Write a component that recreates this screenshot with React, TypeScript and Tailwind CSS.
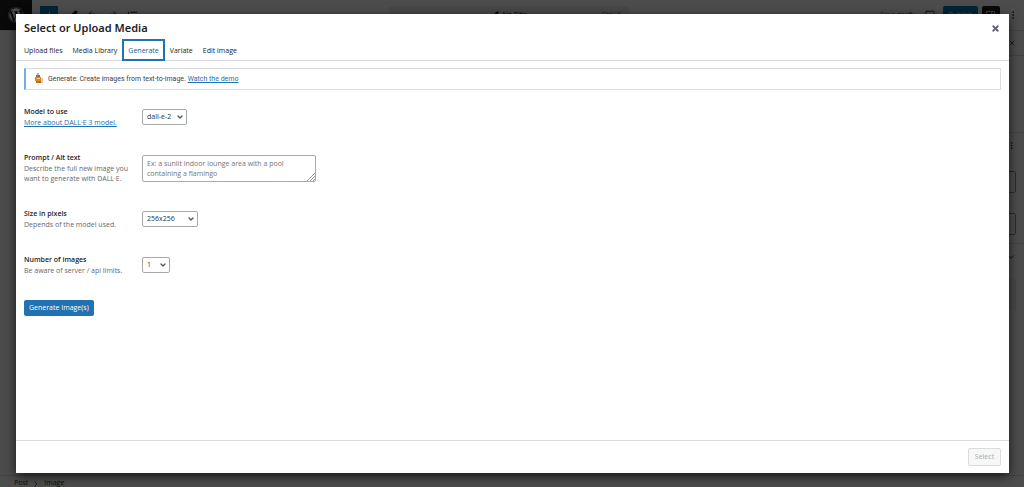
import type { ReactNode } from 'react';
import { ChevronDown, ChevronRight, ListTree, Monitor, MoreVertical, PanelRight, Pencil, Plus, Redo2, Undo2, X } from 'lucide-react';
import { FaWordpress } from 'react-icons/fa';

const tabs = ['Upload files', 'Media Library', 'Generate', 'Variate', 'Edit image'];

function EditorPage() {
  return (
    <div aria-hidden="true" className="flex h-screen flex-col overflow-hidden bg-white text-[7px] text-[#1e1e1e]">
      <header className="flex h-[31px] shrink-0 items-center border-b border-[#e0e0e0]">
        <div className="flex h-full w-8 items-center justify-center bg-[#1e1e1e] text-white">
          <FaWordpress size={16} />
        </div>
        <div className="ml-2 flex items-center gap-[9px]">
          <span className="flex h-[18px] w-[18px] items-center justify-center bg-[#007cba] text-white"><Plus size={11} /></span>
          <Pencil size={11} fill="currentColor" />
          <Undo2 size={11} />
          <Redo2 size={11} />
          <ListTree size={11} />
        </div>
        <div className="mx-auto flex h-[18px] w-60 items-center rounded-xs bg-[#f0f0f0] px-2">
          <span className="flex-1" />
          <span className="flex items-center gap-1"><Pencil size={8} fill="currentColor" />No Title</span>
          <span className="flex-1 text-right text-[#757575]">Ctrl+K</span>
        </div>
        <div className="flex items-center gap-3 pr-[6px]">
          <span className="text-[#007cba]">Save draft</span>
          <Monitor size={10} className="-mr-1" />
          <span className="flex h-[18px] w-[35px] items-center justify-center rounded-xs bg-[#007cba] text-white">Publish</span>
          <span className="-ml-2 flex h-[18px] w-[18px] items-center justify-center rounded-xs bg-[#1e1e1e] text-white"><PanelRight size={11} /></span>
          <MoreVertical size={10} className="-ml-1" />
        </div>
      </header>
      <div className="flex min-h-0 flex-1">
        <div className="flex-1" />
        <aside className="w-[149px] border-l border-[#e0e0e0]">
          <div className="flex h-[25px] items-center justify-end border-b border-[#e0e0e0] pr-2"><X size={8} /></div>
          <div className="h-[77px] border-b border-[#e0e0e0]" />
          <div className="flex h-[38px] items-start justify-end pt-2 pr-2"><MoreVertical size={9} /></div>
          <div className="mr-2 h-[22px] rounded-xs border border-[#949494]" />
          <div className="mt-5 mr-2 h-[22px] rounded-xs border border-[#949494]" />
          <div className="mt-2 flex h-[35px] items-start justify-end border-t border-[#e0e0e0] pt-2 pr-2"><ChevronDown size={10} /></div>
          <div className="mr-2 h-8 bg-[#f0f0f0]" />
        </aside>
      </div>
      <footer className="flex h-3 shrink-0 items-center gap-1 border-t border-[#e0e0e0] px-[14px] pt-1">
        <span>Post</span><ChevronRight size={8} /><span>Image</span>
      </footer>
    </div>
  );
}

function Row({ id, label, help, tall, children }: { id: string; label: string; help: ReactNode; tall?: boolean; children: ReactNode }) {
  return (
    <div className={tall ? 'flex h-14 items-start' : 'flex h-[46px] items-start'}>
      <div className="w-[118px] shrink-0 leading-[10px] text-[#646970]">
        <label htmlFor={id} className="block font-semibold text-[#1d2327]">{label}</label>
        <div className="mt-px">{help}</div>
      </div>
      {children}
    </div>
  );
}

function Dropdown({ id, options, width }: { id: string; options: string[]; width: string }) {
  return (
    <div className={`relative mt-[2px] ${width}`}>
      <select id={id} className="block h-4 w-full appearance-none rounded-xs border border-[#a7aaad] bg-white pl-1 text-[7px] leading-3 text-[#2c3338]">
        {options.map((o) => <option key={o}>{o}</option>)}
      </select>
      <ChevronDown size={8} strokeWidth={4} className="pointer-events-none absolute top-1 right-[3px] text-[#50575e]" />
    </div>
  );
}

function Robot() {
  return (
    <svg width="10" height="12" viewBox="0 0 10 12" aria-hidden="true">
      <path d="M3 0h2v2H3z" fill="#b5b0ac" />
      <path d="M2 2h4v2H2z" fill="#8d6f5c" />
      <path d="M1 4h6v4H1z" fill="#e8851c" />
      <path d="M2 8h5v2H2z" fill="#c76712" />
      <path d="M7 5h2v5H7z" fill="#d7c7b7" />
      <path d="M3 5h3v1H3z" fill="#f6c68f" />
    </svg>
  );
}

function MediaModal() {
  return (
    <div role="dialog" aria-labelledby="media-title" className="absolute top-[14px] right-[15px] bottom-[14px] left-4 flex flex-col bg-white text-[7px] text-[#3c434a] shadow-[0_3px_10px_rgba(0,0,0,0.7)]">
      <header className="border-b border-[#dcdcde] px-2">
        <div className="flex h-[25px] items-center justify-between pt-1">
          <h1 id="media-title" className="font-['Noto_Sans','Open_Sans',sans-serif] text-[11px] font-semibold text-[#1d2327]">Select or Upload Media</h1>
          <button type="button" aria-label="Close" className="p-px text-[#646970]"><X size={9} strokeWidth={5} /></button>
        </div>
        <nav className="-mb-px flex h-[22px] items-stretch" role="tablist">
          {tabs.map((t) => (
            <button
              key={t}
              type="button"
              role="tab"
              aria-selected={t === 'Generate'}
              className={
                t === 'Generate'
                  ? 'border-2 border-[#2271b1] bg-white px-1 pt-[2px] text-[#135e96]'
                  : 'px-[5px] pt-[2px] text-[#1d2327] first:pl-0'
              }
            >
              {t}
            </button>
          ))}
        </nav>
      </header>
      <main className="flex-1 overflow-hidden px-2 pt-[7px]">
        <div className="flex h-[22px] items-center gap-1 border border-l-2 border-[#dcdcde] border-l-[#72aee6] pl-2">
          <Robot />
          <p className="font-['Roboto','Open_Sans',sans-serif]">Generate: Create images from text-to-image. <a href="#demo" className="text-[#2271b1] underline">Watch the demo</a></p>
        </div>
        <form className="mt-[17px]" onSubmit={(e) => e.preventDefault()}>
          <Row id="model" label="Model to use" help={<a href="#model-info" className="text-[#2271b1] underline">More about DALL·E 3 model.</a>}>
            <Dropdown id="model" options={['dall-e-2', 'dall-e-3']} width="w-[45px]" />
          </Row>
          <Row id="prompt" tall label="Prompt / Alt text" help={<>Describe the full new image you<br />want to generate with DALL·E.</>}>
            <div className="relative mt-[2px] w-[174px]">
              <textarea id="prompt" placeholder="Ex: a sunlit indoor lounge area with a pool containing a flamingo" className="block h-[27px] w-full resize-none overflow-hidden rounded-xs border border-[#a7aaad] px-1 py-[3px] leading-[10px] placeholder:text-[#757575]" />
              <svg width="8" height="8" viewBox="0 0 8 8" className="pointer-events-none absolute right-px bottom-px" stroke="#999" aria-hidden="true">
                <path d="M0 8L8 0M3 8L8 3M6 8L8 6" />
              </svg>
            </div>
          </Row>
          <Row id="size" label="Size in pixels" help="Depends of the model used.">
            <Dropdown id="size" options={['256x256', '512x512', '1024x1024']} width="w-14" />
          </Row>
          <Row id="count" label="Number of images" help="Be aware of server / api limits.">
            <Dropdown id="count" options={['1', '2', '3', '4']} width="w-7" />
          </Row>
          <button type="submit" className="-mt-px block h-4 rounded-xs bg-[#2271b1] px-[5px] text-white">Generate Image(s)</button>
        </form>
      </main>
      <footer className="flex h-[33px] shrink-0 items-center justify-end border-t border-[#dcdcde] px-2">
        <button type="button" disabled className="h-[18px] w-[33px] rounded-xs border border-[#dcdcde] bg-[#f6f7f7] text-[#a7aaad]">Select</button>
      </footer>
    </div>
  );
}

export default function App() {
  return (
    <div className="relative h-screen overflow-hidden font-['Open_Sans','Noto_Sans',sans-serif]">
      <EditorPage />
      <div className="absolute inset-0 bg-black/70" />
      <MediaModal />
    </div>
  );
}
